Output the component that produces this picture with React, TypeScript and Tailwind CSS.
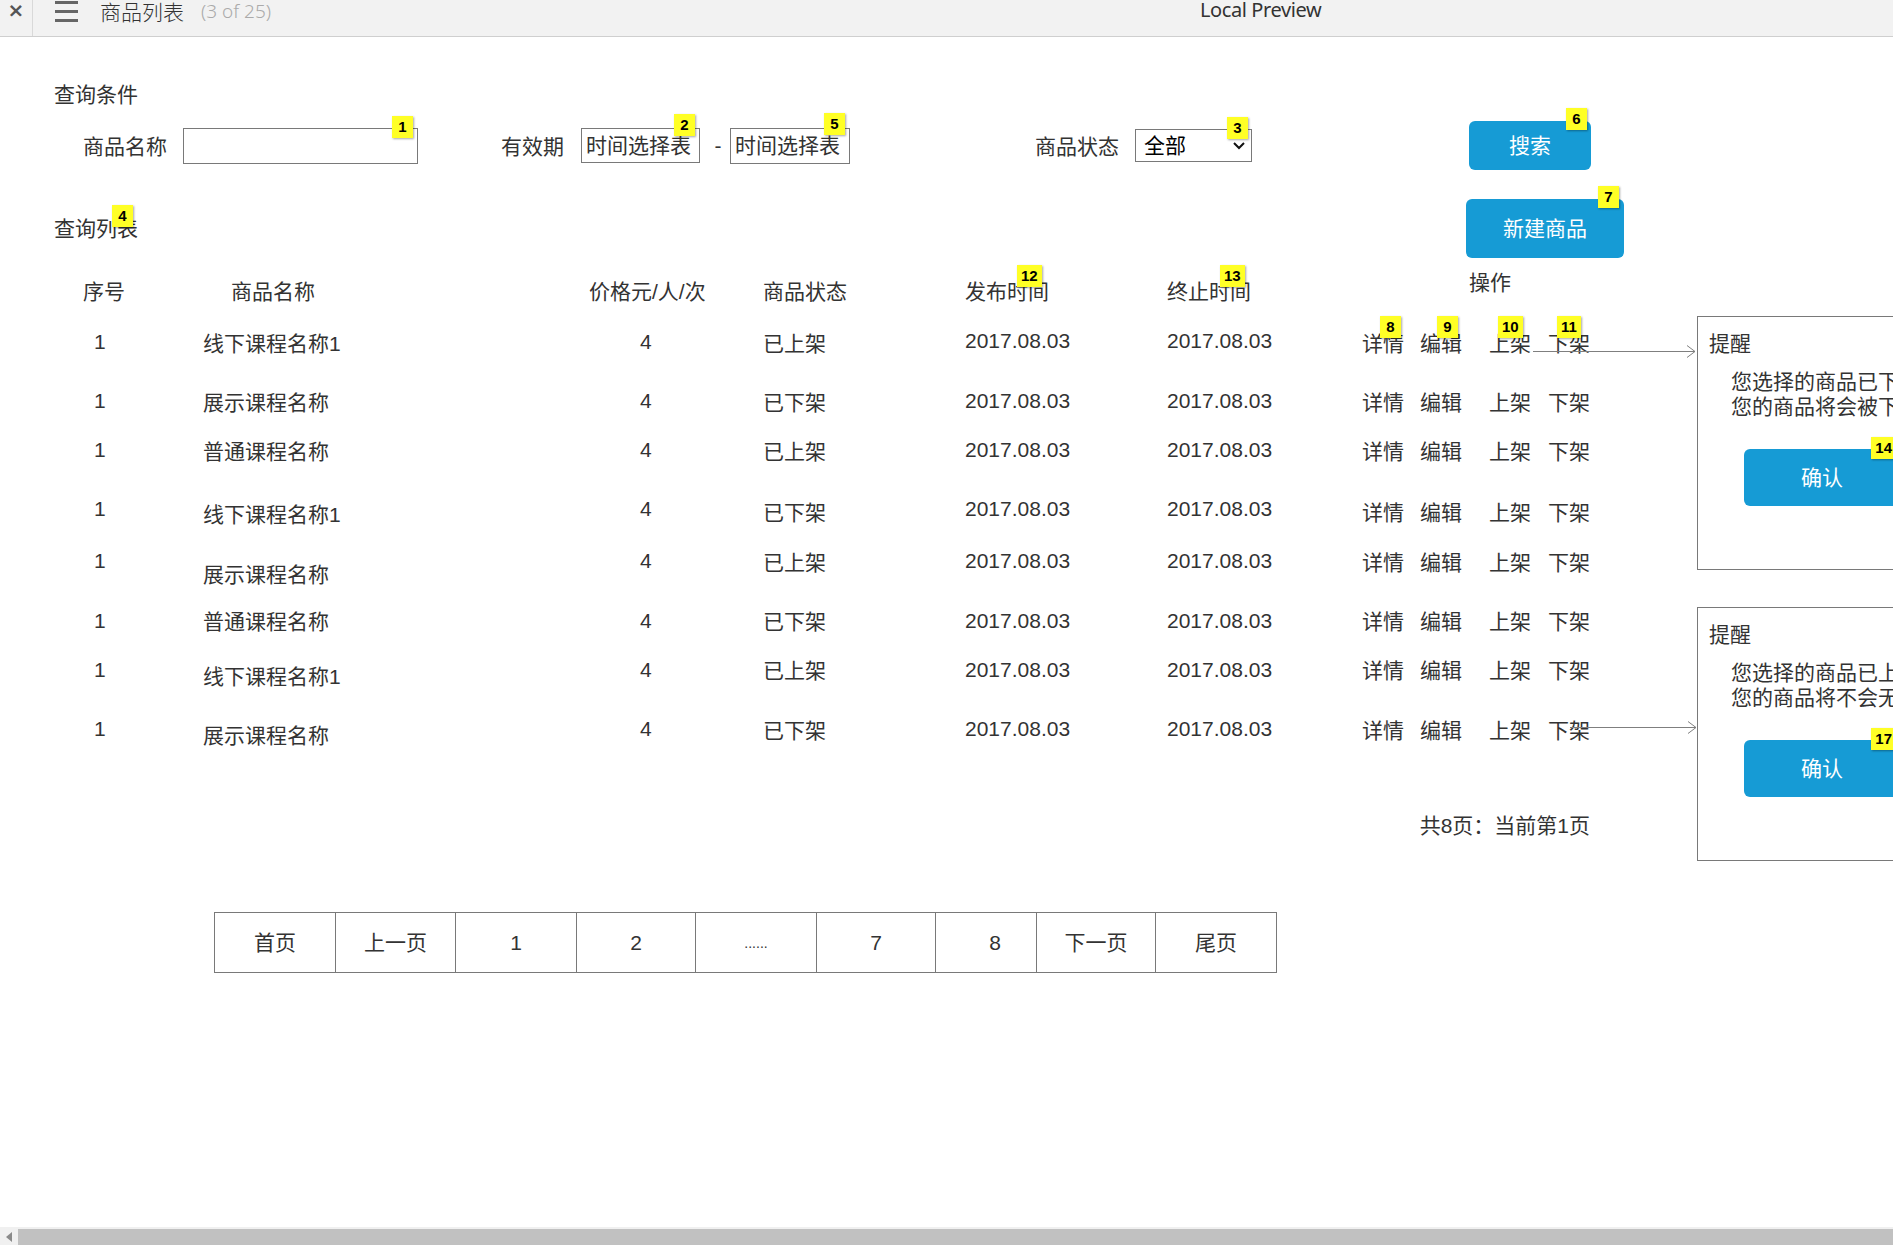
import React from "react";

function Badge({ n, cls }: { n: string; cls: string }) {
  return (
    <span
      className={`absolute ${cls} z-10 h-[22px] min-w-[21px] px-[4px] bg-[#ffff26] text-black text-[15px] font-bold leading-[22px] text-center [font-family:'Liberation_Sans_Narrow','Liberation_Sans',sans-serif] shadow-[1px_1px_2px_rgba(0,0,0,0.35)]`}
    >
      {n}
    </span>
  );
}

const rows = [
  { name: "线下课程名称1", status: "已上架", h: "h-[59px]", nc: "mt-[2px]", sc: "mt-[2px]", dc: "-mt-[1px]", oc: "mt-[2px]" },
  { name: "展示课程名称", status: "已下架", h: "h-[49px]", nc: "mt-[2px]", sc: "mt-[2px]", dc: "mt-0", oc: "mt-[2px]" },
  { name: "普通课程名称", status: "已上架", h: "h-[59px]", nc: "mt-[2px]", sc: "mt-[2px]", dc: "mt-0", oc: "mt-[2px]" },
  { name: "线下课程名称1", status: "已下架", h: "h-[52px]", nc: "mt-[6px]", sc: "mt-[4px]", dc: "mt-0", oc: "mt-[4px]" },
  { name: "展示课程名称", status: "已上架", h: "h-[60px]", nc: "mt-[14px]", sc: "mt-[2px]", dc: "mt-0", oc: "mt-[2px]" },
  { name: "普通课程名称", status: "已下架", h: "h-[49px]", nc: "mt-[1px]", sc: "mt-[1px]", dc: "mt-0", oc: "mt-[1px]" },
  { name: "线下课程名称1", status: "已上架", h: "h-[59px]", nc: "mt-[7px]", sc: "mt-[1px]", dc: "mt-0", oc: "mt-[1px]" },
  { name: "展示课程名称", status: "已下架", h: "h-[28px]", nc: "mt-[7px]", sc: "mt-[2px]", dc: "mt-0", oc: "mt-[2px]" },
];

const pages = [
  { t: "首页", w: "w-[120px]", p: "" },
  { t: "上一页", w: "w-[120px]", p: "" },
  { t: "1", w: "w-[121px]", p: "" },
  { t: "2", w: "w-[119px]", p: "" },
  { t: "......", w: "w-[121px]", p: "" },
  { t: "7", w: "w-[119px]", p: "" },
  { t: "8", w: "w-[101px]", p: "pl-[18px]" },
  { t: "下一页", w: "w-[119px]", p: "" },
  { t: "尾页", w: "w-[121px]", p: "" },
];

function Dialog({ lines, badge }: { lines: string[]; badge: string }) {
  return (
    <div className="w-[330px] h-[254px] border border-[#797979] bg-white pt-[13px]">
      <div className="pl-[11px] leading-[28px]">提醒</div>
      <div className="pl-[33px] mt-[11px] leading-[25px] whitespace-nowrap">
        <div>{lines[0]}</div>
        <div>{lines[1]}</div>
      </div>
      <div className="relative ml-[46px] mt-[30px] w-[156px] h-[57px] rounded-[6px] bg-[#169bd5] text-white flex items-center justify-center">
        确认
        <Badge n={badge} cls="-top-[12px] right-[4px]" />
      </div>
    </div>
  );
}

export default function App() {
  return (
    <div className="w-[1893px] h-[1245px] overflow-hidden flex flex-col bg-white text-[#333333] text-[21px] leading-[28px] [font-family:'Liberation_Sans','Noto_Sans_CJK_SC',sans-serif]">
      {/* top bar */}
      <div className="h-[37px] shrink-0 bg-[#f2f2f2] border-b border-[#cfcfcf] flex items-start relative">
        <div className="w-[33px] h-full border-r border-[#d9d9d9] flex justify-center">
          <span className="text-[20px] leading-[20px] text-[#555] font-bold [font-family:'DejaVu_Sans',sans-serif]">×</span>
        </div>
        <div className="ml-[22px] w-[23px] flex flex-col gap-[6px] mt-[1px]">
          <span className="h-[3px] bg-[#666]" />
          <span className="h-[3px] bg-[#666]" />
          <span className="h-[3px] bg-[#666]" />
        </div>
        <span className="ml-[22px] text-[21px] leading-[22px] font-light [font-family:'Noto_Sans_CJK_SC',sans-serif] text-[#333]">商品列表</span>
        <span className="ml-[17px] text-[19px] leading-[22px] font-light [font-family:'Noto_Sans',sans-serif] text-[#aaa]">(3 of 25)</span>
        <span className="absolute left-[1200px] -top-[2px] text-[20px] leading-[24px] [font-family:'Noto_Sans',sans-serif] text-[#333] tracking-[-0.4px]">Local Preview</span>
      </div>

      {/* body */}
      <div className="flex-1 relative flex">
        <div className="w-[1697px] shrink-0 flex flex-col pt-[44px]">
          <div className="pl-[54px]">查询条件</div>

          {/* query row */}
          <div className="mt-[12px] h-[49px] flex items-center pl-[83px]">
            <span className="w-[100px] mt-[3px]">商品名称</span>
            <div className="relative w-[235px] h-[36px] border border-[#797979]">
              <Badge n="1" cls="-top-[13px] right-[4px]" />
            </div>
            <span className="ml-[83px] w-[80px] mt-[2px]">有效期</span>
            <div className="relative w-[119px] h-[35px] border border-[#797979] pl-[4px] flex items-center whitespace-nowrap">
              时间选择表
              <Badge n="2" cls="-top-[15px] right-[4px]" />
            </div>
            <span className="w-[30px] pl-[6px] text-center">-</span>
            <div className="relative w-[120px] h-[36px] border border-[#797979] pl-[4px] flex items-center whitespace-nowrap">
              时间选择表
              <Badge n="5" cls="-top-[16px] right-[4px]" />
            </div>
            <span className="ml-[185px] w-[100px] mt-[3px]">商品状态</span>
            <div className="relative w-[117px] h-[33px] border border-[#797979] pl-[8px] flex items-center text-black">
              全部
              <svg className="absolute right-[6px] top-[12px]" width="12" height="8" viewBox="0 0 12 8">
                <polyline points="1,1 6,6 11,1" fill="none" stroke="#111" strokeWidth="2" />
              </svg>
              <Badge n="3" cls="-top-[13px] right-[3px]" />
            </div>
            <div className="relative ml-[217px] w-[122px] h-[49px] rounded-[6px] bg-[#169bd5] text-white flex items-center justify-center">
              搜索
              <Badge n="6" cls="-top-[13px] right-[4px]" />
            </div>
          </div>

          {/* list title row */}
          <div className="mt-[29px] h-[59px] flex items-center pl-[54px]">
            <div className="w-[1412px]">
              <span className="relative">
                查询列表
                <Badge n="4" cls="-top-[12px] left-[58px]" />
              </span>
            </div>
            <div className="relative w-[158px] h-[59px] rounded-[6px] bg-[#169bd5] text-white flex items-center justify-center">
              新建商品
              <Badge n="7" cls="-top-[13px] right-[5px]" />
            </div>
          </div>

          {/* table header */}
          <div className="mt-[20px] h-[28px] flex items-start pl-[83px]">
            <span className="w-[148px]">序号</span>
            <span className="w-[358px]">商品名称</span>
            <span className="w-[174px]">价格元/人/次</span>
            <span className="w-[202px]">商品状态</span>
            <span className="w-[202px] relative">
              发布时间
              <Badge n="12" cls="-top-[13px] left-[52px]" />
            </span>
            <span className="w-[302px] relative">
              终止时间
              <Badge n="13" cls="-top-[13px] left-[53px]" />
            </span>
            <span className="-mt-[9px]">操作</span>
          </div>

          {/* rows */}
          <div className="mt-[22px] flex flex-col">
            {rows.map((r, i) => (
              <div key={i} className={`${r.h} flex items-start`}>
                <span className="w-[203px] pl-[94px]">1</span>
                <span className={`w-[437px] ${r.nc}`}>{r.name}</span>
                <span className="w-[123px]">4</span>
                <span className={`w-[202px] ${r.sc}`}>{r.status}</span>
                <span className={`w-[202px] ${r.dc}`}>2017.08.03</span>
                <span className={`w-[195px] ${r.dc}`}>2017.08.03</span>
                <div className={`flex ${r.oc}`}>
                  <span className="w-[58px] relative">
                    详情
                    {i === 0 && <Badge n="8" cls="-top-[14px] left-[18px]" />}
                  </span>
                  <span className="w-[69px] relative">
                    编辑
                    {i === 0 && <Badge n="9" cls="-top-[14px] left-[17px]" />}
                  </span>
                  <span className="w-[59px] relative">
                    上架
                    {i === 0 && <Badge n="10" cls="-top-[14px] left-[9px]" />}
                  </span>
                  <span className="relative">
                    下架
                    {i === 0 && <Badge n="11" cls="-top-[14px] left-[9px]" />}
                  </span>
                </div>
              </div>
            ))}
          </div>

          <div className="mt-[69px] w-[1590px] flex justify-end">共8页：当前第1页</div>

          {/* pagination */}
          <div className="mt-[72px] pl-[214px] flex">
            <div className="flex border border-[#797979] h-[61px]">
              {pages.map((p, i) => (
                <div
                  key={i}
                  className={`${p.w} ${p.p} h-full flex items-center justify-center ${i > 0 ? "border-l border-[#797979]" : ""}`}
                >
                  {p.t === "......" ? <span className="text-[14px]">......</span> : p.t}
                </div>
              ))}
            </div>
          </div>
        </div>

        {/* dialogs column */}
        <div className="w-[330px] shrink-0 pt-[279px] flex flex-col gap-[37px]">
          <Dialog lines={["您选择的商品已下架，", "您的商品将会被下架处理"]} badge="14" />
          <Dialog lines={["您选择的商品已上架，", "您的商品将不会无法购买"]} badge="17" />
        </div>

        {/* connector arrows */}
        <svg className="absolute left-0 top-0 pointer-events-none" width="1893" height="800">
          <line x1="1533" y1="314.5" x2="1695" y2="314.5" stroke="#7f7f7f" strokeWidth="1" />
          <polyline points="1687,308.5 1695,314.5 1687,320.5" fill="none" stroke="#7f7f7f" strokeWidth="1" />
          <line x1="1570" y1="690.5" x2="1696" y2="690.5" stroke="#7f7f7f" strokeWidth="1" />
          <polyline points="1688,684.5 1696,690.5 1688,696.5" fill="none" stroke="#7f7f7f" strokeWidth="1" />
        </svg>
      </div>

      {/* horizontal scrollbar */}
      <div className="h-[18px] shrink-0 flex flex-col">
        <div className="h-[2px] bg-[#f0f0f0]" />
        <div className="flex-1 flex">
          <div className="w-[18px] bg-[#f0f0f0] flex items-center justify-center">
            <svg width="8" height="10" viewBox="0 0 8 10">
              <polygon points="7,0 7,10 1,5" fill="#8a8a8a" />
            </svg>
          </div>
          <div className="flex-1 bg-[#c1c1c1]" />
        </div>
      </div>
    </div>
  );
}
